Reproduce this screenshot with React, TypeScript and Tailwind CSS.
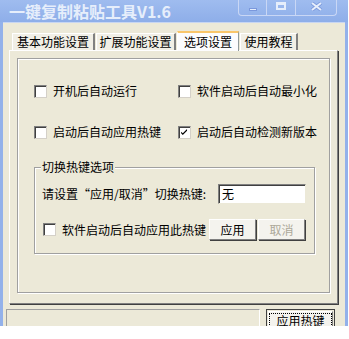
import React from 'react';

const font = "font-['SimSun','Noto_Sans_CJK_SC',sans-serif]";

const CheckBox = ({ checked = false }: { checked?: boolean }) => (
  <span className="relative inline-block w-[13px] h-[13px] shrink-0 bg-white border border-t-[#808080] border-l-[#808080] border-r-[#d4d0c8] border-b-[#d4d0c8] shadow-[inset_1px_1px_0_#404040]">
    {checked && (
      <svg viewBox="0 0 13 13" className="absolute left-0 top-0 w-[11px] h-[11px]">
        <path d="M2 5 L4 7 L9 2 L9 4 L4 9 L2 7 Z" fill="#000" transform="translate(0.5,0.5)" />
      </svg>
    )}
  </span>
);

const Check = ({ label, checked }: { label: string; checked?: boolean }) => (
  <div className="flex items-center gap-[6px] text-[12px] leading-[14px] text-black">
    <CheckBox checked={checked} />
    <span>{label}</span>
  </div>
);

const Tab = ({ label, active, w }: { label: string; active?: boolean; w: string }) =>
  active ? (
    <div className={`relative ${w} h-[20px] -mb-px z-10 bg-[#fcfcfe] border-l border-r border-l-white border-r-[#919b9c] border-t-2 border-t-[#f9c66b] flex items-center justify-center text-[12px] text-black`}>
      {label}
    </div>
  ) : (
    <div className={`${w} h-[17px] bg-[#f1efe6] border-l border-t border-l-white border-t-white border-r-2 border-r-[#808080] flex items-center justify-center text-[12px] text-black`}>
      {label}
    </div>
  );

const Btn = ({ label, disabled, className = '' }: { label: string; disabled?: boolean; className?: string }) => (
  <div className={`h-[21px] flex items-center justify-center bg-[#f4f3ee] border border-t-white border-l-white border-r-[#808080] border-b-[#808080] shadow-[1px_1px_0_#404040] text-[12px] ${disabled ? 'text-[#aca899]' : 'text-black'} ${className}`}>
    {label}
  </div>
);

export default function App() {
  return (
    <div className={`w-[349px] h-[339px] bg-white ${font}`}>
      <div className="w-[348px] h-[326px] overflow-hidden flex flex-col bg-[#93b1ea] px-[3px]">
        {/* Title bar */}
        <div className="h-[22px] shrink-0 flex items-start bg-gradient-to-b from-[#9fbcef] to-[#8eaee9] -mx-[3px] px-[3px]">
          <span className="pl-[6px] pt-[1px] text-[16px] leading-[20px] font-bold text-[#e6eefb]">一键复制粘贴工具V1.6</span>
          <div className="ml-auto mr-[8px] flex h-[16px] border border-t-0 border-[#c9d7f5] rounded-b-[4px]">
            <div className="w-[28px] flex items-center justify-center border-r border-[#c9d7f5]">
              <span className="w-[8px] h-[3px] mt-[3px] bg-[#e6eefb] border border-[#7b98dc]" />
            </div>
            <div className="w-[29px] flex items-center justify-center border-r border-[#c9d7f5]">
              <span className="w-[10px] h-[8px] -mt-[3px] border-2 border-t-[3px] border-[#e6eefb]" />
            </div>
            <div className="w-[40px] flex items-center justify-center">
              <svg width="11" height="9" viewBox="0 0 11 9" className="-mt-[3px]">
                <path d="M1 1 L10 8 M10 1 L1 8" stroke="#7b98dc" strokeWidth="3.6" />
                <path d="M1 1 L10 8 M10 1 L1 8" stroke="#e6eefb" strokeWidth="2" />
              </svg>
            </div>
          </div>
        </div>

        {/* Client area */}
        <div className="flex-1 bg-[#ece9d8] border-t border-[#c8d6f2] flex flex-col px-[6px] pt-[7px]">
          <div className="flex items-end h-[20px] pl-[3px] gap-[1px]">
            <Tab label="基本功能设置" w="w-[83px]" />
            <Tab label="扩展功能设置" w="w-[80px]" />
            <Tab label="选项设置" active w="w-[62px]" />
            <Tab label="使用教程" w="w-[58px]" />
          </div>

          {/* Tab panel */}
          <div className="w-[329px] h-[254px] border border-t-white border-l-white border-r-[#808080] border-b-[#808080] shadow-[1px_1px_0_#404040] px-[7px] pt-[7px]">
            <div className="h-[235px] border border-[#a0a0a0] shadow-[1px_1px_0_#fff,inset_1px_1px_0_#fff] flex flex-col">
              <div className="grid grid-cols-[144px_1fr] gap-y-[27px] pl-[16px] pt-[25px]">
                <Check label="开机后自动运行" />
                <Check label="软件启动后自动最小化" />
                <Check label="启动后自动应用热键" />
                <Check label="启动后自动检测新版本" checked />
              </div>

              {/* Group box */}
              <div className="relative mt-[28px] ml-[16px] w-[281px] h-[87px] border border-[#a0a0a0] shadow-[1px_1px_0_#fff,inset_1px_1px_0_#fff] pl-[7px] pr-[7px] pt-[16px]">
                <span className="absolute -top-[8px] left-[6px] px-[1px] bg-[#ece9d8] text-[12px] leading-[14px] text-black">切换热键选项</span>
                <div className="flex items-center text-[12px] leading-[14px] text-black">
                  <span className="w-[176px] whitespace-nowrap">请设置“应用/取消”切换热键:</span>
                  <div className="w-[88px] h-[20px] bg-white border border-t-[#808080] border-l-[#808080] border-r-[#ece9d8] border-b-[#ece9d8] shadow-[inset_1px_1px_0_#404040] pl-[3px] flex items-center">无</div>
                </div>
                <div className="flex items-center mt-[15px]">
                  <div className="w-[167px] pl-[1px]">
                    <Check label="软件启动后自动应用此热键" />
                  </div>
                  <Btn label="应用" className="w-[47px]" />
                  <Btn label="取消" disabled className="w-[47px] ml-[2px]" />
                </div>
              </div>
            </div>
          </div>

          {/* Status area */}
          <div className="flex mt-[5px] gap-[6px] -ml-[3px]">
            <div className="w-[254px] h-[22px] border border-t-[#a0a0a0] border-l-[#a0a0a0] border-r-white border-b-white" />
            <div className="w-[69px] h-[22px] border border-[#404040] p-[1px]">
              <div className="h-full bg-[#f4f3ee] border border-t-white border-l-white border-r-[#808080] border-b-[#808080] flex items-start justify-center pt-[1px]">
                <span className="border border-dotted border-black px-[6px] text-[12px] leading-[14px] text-black">应用热键</span>
              </div>
            </div>
          </div>
        </div>
      </div>
    </div>
  );
}
